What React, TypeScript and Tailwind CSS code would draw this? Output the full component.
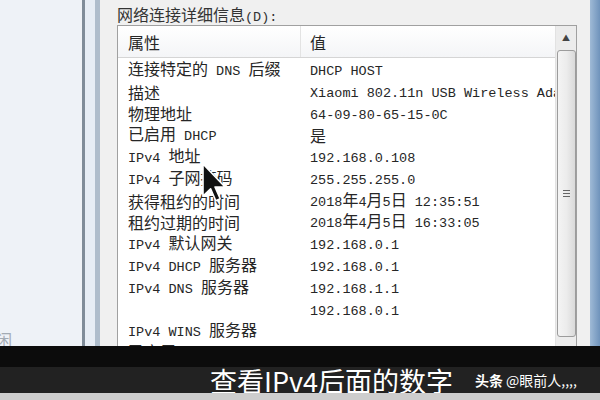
import React from 'react';

// 属性 / 值 rows of the details list
const rows: [string, string][] = [
  ['连接特定的 DNS 后缀', 'DHCP HOST'],
  ['描述', 'Xiaomi 802.11n USB Wireless Adapter'],
  ['物理地址', '64-09-80-65-15-0C'],
  ['已启用 DHCP', '是'],
  ['IPv4 地址', '192.168.0.108'],
  ['IPv4 子网掩码', '255.255.255.0'],
  ['获得租约的时间', '2018年4月5日 12:35:51'],
  ['租约过期的时间', '2018年4月5日 16:33:05'],
  ['IPv4 默认网关', '192.168.0.1'],
  ['IPv4 DHCP 服务器', '192.168.0.1'],
  ['IPv4 DNS 服务器', '192.168.1.1'],
  ['', '192.168.0.1'],
  ['IPv4 WINS 服务器', ''],
  ['已启用 NetBIOS over Tcpip', '是'],
];

// mixes CJK (full width) and latin (half width, monospace) like SimSun
function Mixed({ text }: { text: string }) {
  const parts = text.split(/([\u4e00-\u9fff]+)/).filter(p => p !== '');
  return (
    <>
      {parts.map((p, i) =>
        /[\u4e00-\u9fff]/.test(p) ? (
          <span key={i} className="font-['Noto_Sans_CJK_SC',sans-serif] text-[16px]">{p}</span>
        ) : (
          <span key={i} className="font-['Liberation_Mono',monospace] text-[13.5px] whitespace-pre">{p}</span>
        ),
      )}
    </>
  );
}

function Cursor() {
  return (
    <svg className="absolute left-[201px] top-[162px]" width="26" height="42" viewBox="0 0 13 21">
      <path d="M1 1 L1 17 L4.8 13.4 L7.4 19.4 L9.6 18.4 L7 12.5 L12 12.5 Z" fill="#111" stroke="#fff" strokeWidth="0.8" strokeLinejoin="round" />
    </svg>
  );
}

export default function App() {
  return (
    <div className="relative w-[600px] h-[400px] overflow-hidden flex bg-[#f0f0f0] font-['Noto_Sans_CJK_SC',sans-serif]">
      {/* left window behind the dialog */}
      <div className="w-[82px] bg-[#eef2f7] flex flex-col pt-[329px] overflow-hidden">
        <span className="text-[16px] text-[#a3abb4] -ml-[4px] leading-[20px]">闲</span>
      </div>
      <div className="w-[3px] bg-[#7f8c99]" />
      <div className="w-[10px] bg-[#e6edf5]" />
      <div className="w-[5px] bg-[#aebdcc]" />

      {/* dialog */}
      <div className="w-[490px] flex flex-col pl-[17px]">
        <div className="mt-[4px] h-[20px] leading-[20px] text-[#333] whitespace-nowrap">
          <span className="text-[16px]">网络连接详细信息</span>
          <span className="font-['Liberation_Mono',monospace] text-[13.5px]">(D):</span>
        </div>

        <div className="mt-[1px] w-[460px] h-[400px] border border-[#a0a0a0] bg-white flex">
          <div className="flex-1 flex flex-col text-[#262626] overflow-hidden">
            <div className="h-[32px] flex items-center border-b border-[#d5d5d5] bg-gradient-to-b from-white to-[#f4f5f7]">
              <div className="w-[183px] h-full flex items-center pl-[10px] border-r border-[#e3e3e3]">
                <span className="text-[16px]">属性</span>
              </div>
              <div className="pl-[9px] text-[16px]">值</div>
            </div>
            <div className="pt-[1px]">
              {rows.map(([k, v], i) => (
                <div key={i} className="h-[21.8px] flex items-center whitespace-nowrap">
                  <div className="w-[183px] shrink-0 pl-[10px] leading-[20px]">
                    <Mixed text={k} />
                  </div>
                  <div className="pl-[9px] leading-[20px] overflow-hidden">
                    <Mixed text={v} />
                  </div>
                </div>
              ))}
            </div>
          </div>

          {/* scrollbar */}
          <div className="w-[21px] bg-[#ececec] border-l border-[#e2e2e2] flex flex-col items-center">
            <div className="h-[23px] w-full flex items-center justify-center text-[8px] text-[#444] leading-none">▲</div>
            <div className="mt-[1px] w-[19px] h-[287px] rounded-[3px] border border-[#9c9c9c] bg-gradient-to-r from-[#f4f4f4] via-[#ececec] to-[#dadada] flex items-center justify-center">
              <div className="flex flex-col gap-[2px]">
                <div className="w-[7px] h-[1px] bg-[#666]" />
                <div className="w-[7px] h-[1px] bg-[#666]" />
                <div className="w-[7px] h-[1px] bg-[#666]" />
              </div>
            </div>
          </div>
        </div>
      </div>

      {/* right window edge */}
      <div className="w-[10px] bg-gradient-to-r from-[#9fbad6] to-[#6f93bb]" />

      <Cursor />

      {/* video subtitle band */}
      <div className="absolute left-0 right-0 top-[346px] bottom-0 flex flex-col">
        <div className="h-[21px] bg-[#0c0c0c]" />
        <div className="h-[26px] bg-[#222222] flex items-center whitespace-nowrap">
          <span className="pl-[210px] text-[27px] leading-none text-white">查看IPv4后面的数字</span>
          <span className="ml-[22px] text-[14px] leading-none text-white font-bold">头条</span>
          <span className="ml-[3px] text-[14px] leading-none text-white">@眼前人,,,,</span>
        </div>
        <div className="flex-1 bg-[#cdcdcd]" />
      </div>
    </div>
  );
}
